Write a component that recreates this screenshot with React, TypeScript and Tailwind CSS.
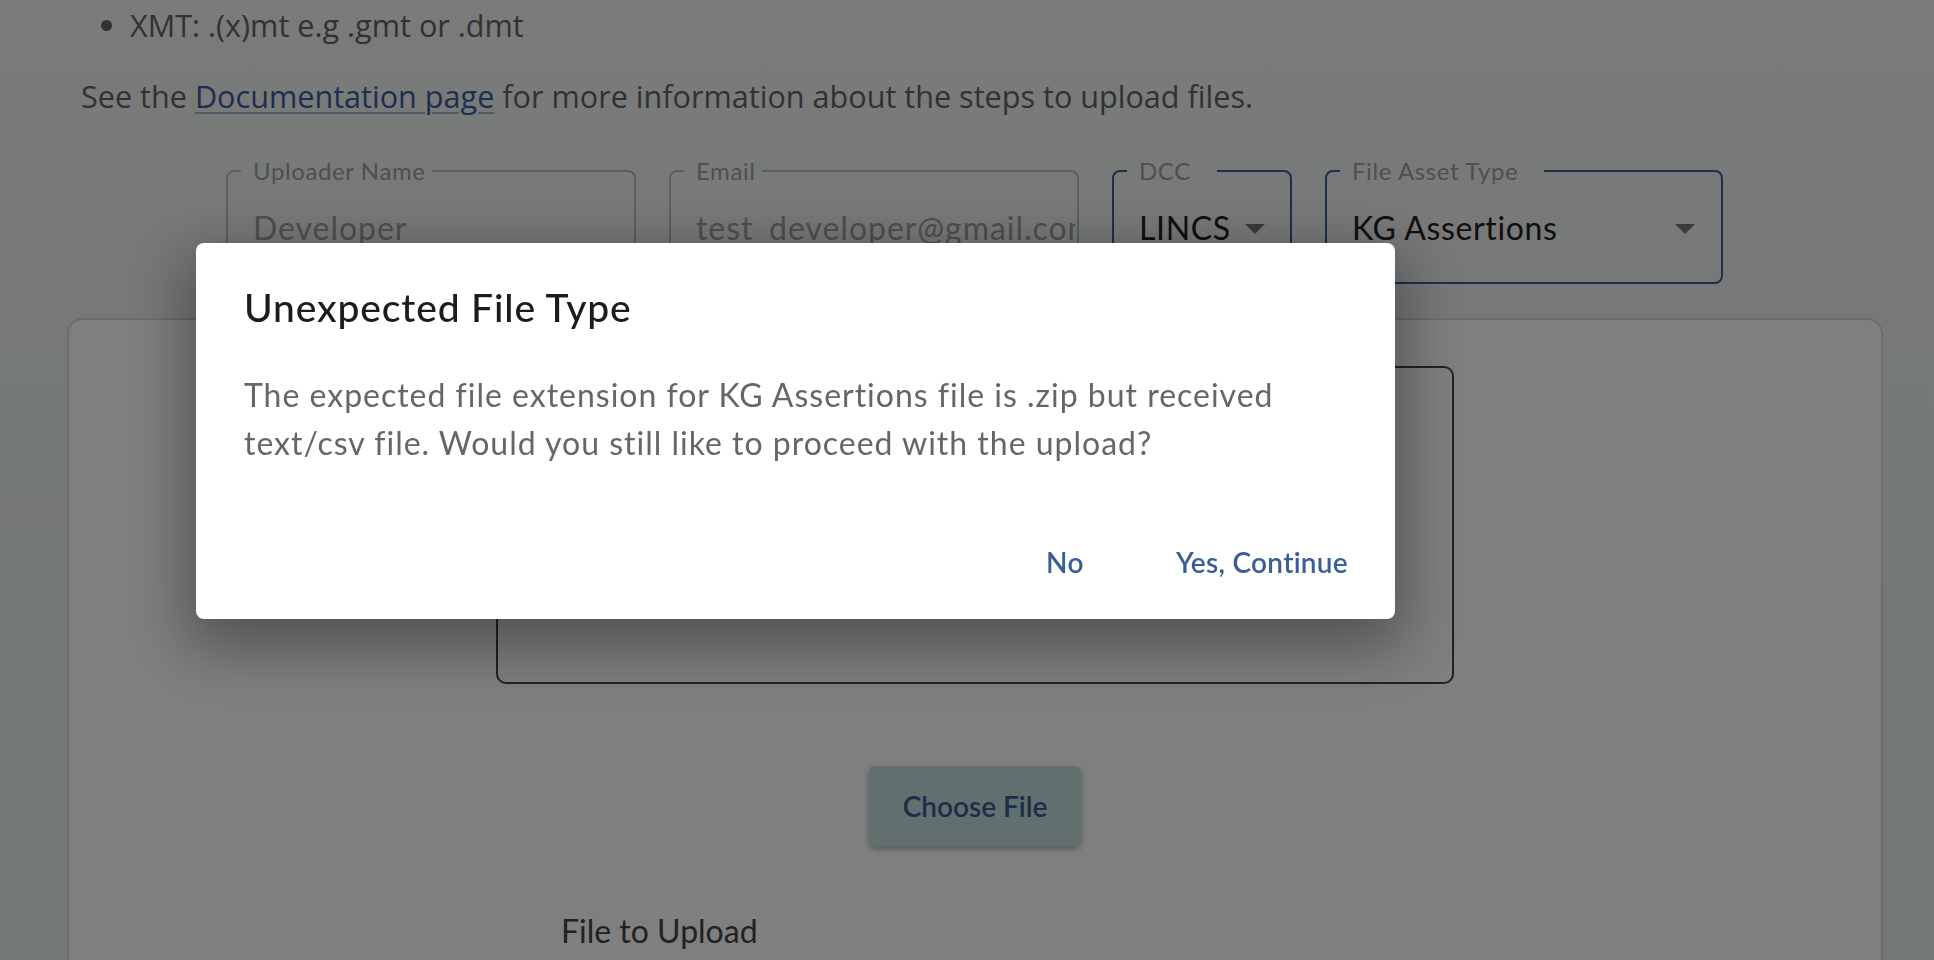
import React from "react";

const sans = "font-['Lato',sans-serif]";

const Arrow = () => (
  <svg viewBox="0 0 24 24" className="w-[48px] h-[48px] shrink-0 fill-[#757575]">
    <path d="M7 10l5 5 5-5z" />
  </svg>
);

type FieldProps = {
  label: string;
  value: string;
  width: string;
  disabled?: boolean;
  select?: boolean;
};

const Field = ({ label, value, width, disabled, select }: FieldProps) => {
  const border = disabled ? "border-[#bdbdbd]" : "border-[#3a5f94]";
  return (
    <fieldset className={`${width} h-[127px] min-w-0 shrink-0 rounded-[8px] border-2 ${border}`}>
      <legend
        className={`ml-[13px] pl-[12px] ${select ? "pr-[26px]" : "pr-[6px]"} text-[24px] leading-[28px] tracking-[0.025em] text-[#9e9e9e]`}
      >
        {label}
      </legend>
      <div className={`flex h-[97px] items-center pb-[12px] pl-[25px] ${select ? "pr-[12px]" : "pr-[2px]"}`}>
        <div
          className={`flex-1 whitespace-nowrap text-[32px] ${
            disabled ? "overflow-hidden tracking-[0.03em] text-[#9e9e9e]" : "tracking-[0.02em] text-[#212121]"
          }`}
        >
          {value}
        </div>
        {select && <Arrow />}
      </div>
    </fieldset>
  );
};

const App = () => {
  return (
    <div
      className={`relative h-[960px] overflow-hidden bg-[linear-gradient(180deg,#f5f6f6_0%,#eef2f2_30%,#e8f0f0_100%)] ${sans}`}
    >
      <div className="pl-[67px] pr-[51px] pt-[1px]">
        {/* intro text */}
        <div className="pl-[14px] font-['Open_Sans',sans-serif] text-[30.6px] leading-[48px] text-[#646464]">
          <ul className="list-disc pl-[49px]">
            <li>XMT: .(x)mt e.g .gmt or .dmt</li>
          </ul>
          <p className="mt-[23px]">
            See the{" "}
            <a className="text-[#3b5fa0] underline decoration-[#3b5fa0]/40 decoration-2 underline-offset-4">
              Documentation page
            </a>{" "}
            for more information about the steps to upload files.
          </p>
        </div>

        {/* fields */}
        <div className="ml-[159px] mt-[37px] flex gap-[33px]">
          <Field label="Uploader Name" value="Developer" width="w-[410px]" disabled />
          <Field label="Email" value="test_developer@gmail.com" width="w-[410px]" disabled />
          <Field label="DCC" value="LINCS" width="w-[180px]" select />
          <Field label="File Asset Type" value="KG Assertions" width="w-[398px]" select />
        </div>

        {/* upload card */}
        <div className="mt-[34px] h-[800px] rounded-[16px] border-2 border-[#d6dada] bg-white pt-[46px]">
          <div className="mx-auto h-[318px] w-[958px] rounded-[10px] border-2 border-[#444444]" />
          <div className="mt-[82px] flex justify-center">
            <button className="h-[80px] w-[212px] rounded-[6px] bg-[#c2dede] text-[28px] font-semibold text-[#3a5a98] shadow-[0_3px_6px_rgba(0,0,0,0.3)]">
              Choose File
            </button>
          </div>
          <div className="ml-[492px] mt-[61px] text-[32px] leading-[48px] text-[#444444]">File to Upload</div>
        </div>
      </div>

      {/* backdrop */}
      <div className="fixed inset-0 bg-black/50" />

      {/* dialog */}
      <div className="fixed left-[196px] top-[243px] w-[1199px] rounded-[8px] bg-white shadow-[0_20px_60px_10px_rgba(0,0,0,0.35)]">
        <h2 className="px-[48px] pt-[32px] text-[39px] font-medium leading-[64px] tracking-[0.022em] text-[#1c1c1c]">
          Unexpected File Type
        </h2>
        <p className="px-[48px] pt-[32px] text-[32px] leading-[48px] tracking-[0.031em] text-[#666666]">
          The expected file extension for KG Assertions file is .zip but received text/csv file. Would you
          still like to proceed with the upload?
        </p>
        <div className="flex justify-end gap-[31px] pb-[21px] pr-[31px] pt-[58px]">
          <button className="h-[73px] min-w-[128px] px-[16px] text-[28px] font-semibold tracking-[0.01em] text-[#3a5f94]">
            No
          </button>
          <button className="h-[73px] px-[16px] text-[28px] font-semibold tracking-[0.01em] text-[#3a5f94]">
            Yes, Continue
          </button>
        </div>
      </div>
    </div>
  );
};

export default App;
